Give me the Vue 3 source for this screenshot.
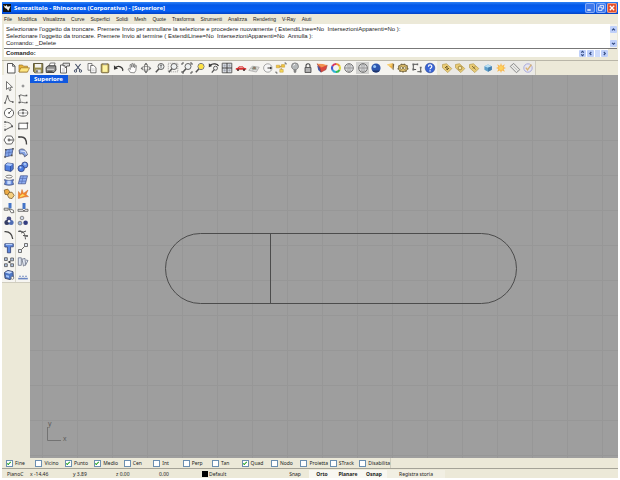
<script setup>
import { ref } from 'vue'

const menus = ['File', 'Modifica', 'Visualizza', 'Curve', 'Superfici', 'Solidi', 'Mesh', 'Quote', 'Trasforma', 'Strumenti', 'Analizza', 'Rendering', 'V-Ray', 'Aiuti']

const history = [
  "Selezionare l'oggetto da troncare. Premere Invio per annullare la selezione e procedere nuovamente ( EstendiLinee=No  IntersezioniApparenti=No ):",
  "Selezionare l'oggetto da troncare. Premere Invio al termine ( EstendiLinee=No  IntersezioniApparenti=No  Annulla ):",
  'Comando: _Delete'
]
const command = ref('')

const lens = '<circle cx="7" cy="4.5" r="3" fill="#eef1f2" stroke="#555"/><path d="M5 6.7 1.8 10.2" stroke="#444" stroke-width="1.5"/>'
const ball = (c) => `<circle cx="6" cy="6" r="4.3" fill="${c}" stroke="#555" stroke-width=".9"/><path d="M6 1.7v8.6M1.8 6h8.4" stroke="#777" stroke-width=".7"/><ellipse cx="6" cy="6" rx="2" ry="4.2" fill="none" stroke="#888" stroke-width=".6"/>`
const tag = (inner) => `<path d="M1.5 2.5 5.5 1.8 10.8 6.6 6.8 10.6 1.5 5.8z" fill="#e9c869" stroke="#b0923f" stroke-width=".7"/>${inner}`

const mainTools = [
  ['Nuovo', '<path d="M2.5 1.5h5l2.5 2.7v6.8H2.5z" fill="#fff" stroke="#333" stroke-width=".9"/><path d="M7.5 1.5v2.7H10" fill="none" stroke="#333" stroke-width=".8"/>'],
  ['Apri', '<path d="M1 3h3.5l1 1.2h4V10H1z" fill="#e9ae25" stroke="#916412" stroke-width=".7"/><path d="M2.8 5.8h8.7L9.5 10H1z" fill="#ffe576" stroke="#916412" stroke-width=".7"/>'],
  ['Salva', '<path d="M1.5 1.5h9.3v9.3H2.8L1.5 9.5z" fill="#8f823b" stroke="#443e20" stroke-width=".9"/><path d="M3 2h6.2v3.6H3z" fill="#f3f3ef"/><path d="M3.7 7.6h5v3H3.7z" fill="#ddd"/><path d="M4.3 8.2h1.3v2.4H4.3z" fill="#333"/>'],
  ['Stampa', '<path d="M4 4 5.3 1h4.8L9 4.5z" fill="#fff" stroke="#333" stroke-width=".7"/><path d="M1 5.6 3.2 3.8h7.5L11 8 9 10.5H1.3z" fill="#888" stroke="#222" stroke-width=".9"/><path d="M2 7.3h7" stroke="#ddd"/><path d="M2.5 9.3h5" stroke="#333"/>'],
  ['Proprietà', '<path d="M1.5 3h6v8h-6z" fill="#fff" stroke="#444" stroke-width=".9"/><path d="M4 1.2h6.5V4H8L6.3 6 6 3.8H4z" fill="#ddd" stroke="#333" stroke-width=".8"/><path d="M3 7h3M3 9h3" stroke="#999" stroke-width=".6"/>'],
  ['Taglia', '<path d="M3.4 2 8 8M8.6 2 4 8" stroke="#34405a" stroke-width="1.1"/><circle cx="3.5" cy="9" r="1.2" fill="none" stroke="#34405a"/><circle cx="8.5" cy="9" r="1.2" fill="none" stroke="#34405a"/>'],
  ['Copia', '<path d="M2 1.5h4v6.7H2z" fill="#fff" stroke="#555" stroke-width=".8"/><path d="M4.7 3.5h3L10 5.7v5.1H4.7z" fill="#fff" stroke="#444" stroke-width=".8"/><path d="M6 7h2.7M6 8.7h2.7" stroke="#aaa" stroke-width=".6"/>'],
  ['Incolla', '<rect x="2.2" y="1.8" width="7.6" height="9" rx="1" fill="#a88e38" stroke="#5e5024" stroke-width=".8"/><path d="M3.5 3.2h5v6.7h-5z" fill="#fff49b"/><path d="M4.3 1.2h3.4v1.6H4.3z" fill="#999"/>'],
  ['Annulla', '<path d="M2.3 6C4 3.6 7.2 4 9 6c1.2 1.4 1 2.2.6 3" fill="none" stroke="#222" stroke-width="1.2"/><path d="M.9 3.2 1 7.7 5 6.5z" fill="#222"/>'],
  ['Panoramica', '<path d="M3.4 10.5 1.2 7.2 1.8 6.4 3.4 7.4 3 2.8l1-.4.8 3V1.6l1-.2.5 3.7.6-3.3.9.2-.2 3.8 1-2.4.8.2-.6 5-1.4 2.2z" fill="#fff" stroke="#666" stroke-width=".8"/>'],
  ['Ruota vista', '<ellipse cx="6" cy="6.3" rx="4.7" ry="1.9" fill="none" stroke="#888" stroke-width=".9"/><ellipse cx="6" cy="6" rx="1.7" ry="4.5" fill="none" stroke="#666" stroke-width=".9"/><path d="M4.3 2.8 6 .7l1.7 2.1zM4.3 9.2 6 11.3l1.7-2.1zM2.7 4.9.8 6.5l1.9 1.6zM9.3 4.9l1.9 1.6-1.9 1.6z" fill="#555"/>'],
  ['Zoom dinamico', lens + '<path d="M7 2.7v3.6M6 3.8l1-1 1 1" fill="none" stroke="#333" stroke-width=".7"/>'],
  ['Zoom finestra', '<path d="M1.3 1.3h9.5v8.5H1.3z" fill="none" stroke="#666" stroke-width=".7" stroke-dasharray="1 1"/>' + lens],
  ['Zoom estensioni', lens + '<path d="M1 3V1h2M9 1h2v2M1 9v2h2M9 11h2V9" fill="none" stroke="#333" stroke-width=".9"/>'],
  ['Zoom selezionato', lens + '<circle cx="7" cy="4.5" r="2.5" fill="#ffe12d"/>'],
  ['Annulla vista', '<path d="M2 3.2C5 .8 9.5 1.8 10.5 4" fill="none" stroke="#222" stroke-width="1.2"/><path d="M.8 1.3v4l3.4-1.2z" fill="#222"/><circle cx="7.5" cy="6.2" r="2" fill="#eee" stroke="#555"/><path d="M6.2 7.7 3.8 10.6" stroke="#444" stroke-width="1.3"/>'],
  ['Quattro viste', '<path d="M1.2 1.2h9.6v9.6H1.2z" fill="#d3d8de" stroke="#444" stroke-width=".9"/><path d="M6 1v10M1 6h10" stroke="#333"/><path d="M2.4 3.7h2.4M7.3 3.7h2.4M2.4 8.4h2.4M7.3 8.4h2.4M3.6 2.5v2.2M8.5 2.5v2.2M3.6 7.3v2.2M8.5 7.3v2.2" stroke="#8990a0" stroke-width=".6"/>'],
  ['Vista destra', '<path d="M.8 7.8V6.2l2-.5 1.3-1.5h3.6L9 5.8l2.2.5v1.5z" fill="#d21d1d"/><path d="M4.6 4.8h2.8l.6.9H4z" fill="#f5b8b0"/><circle cx="3" cy="8" r="1.1" fill="#331b1b"/><circle cx="9" cy="8" r="1.1" fill="#331b1b"/>'],
  ['Piano di costruzione', '<path d="M.8 8.4 4.2 4.2l7 1L8.3 10z" fill="#ddd" stroke="#999" stroke-width=".7"/><path d="M2.5 6.3 9.7 7.8M6.5 4.7 4.5 9" stroke="#aaa" stroke-width=".6"/><path d="M4 6.2c1-2 3-2.4 4.4-.2L8 7.5H4.4z" fill="#79886f"/><path d="M5.5 6h1.7" stroke="#a2453d"/>'],
  ['Centro', '<circle cx="5.8" cy="6" r="4.2" fill="#f7f7f7" stroke="#888" stroke-width=".8"/><path d="M5.5 6h4" stroke="#222"/><path d="M8 4.6 10 6 8 7.4z" fill="#222"/>'],
  ['Seleziona', '<path d="M9.5 1H11v1.6M1 9.5V11h1.5" fill="none" stroke="#444" stroke-width=".9"/><path d="M1.3 3.2h3.4v2.6H1.3zM6.4 2.6h3.2v2.6H6.4z" fill="#f3c02a" stroke="#b98d1f" stroke-width=".5"/><path d="M4.8 7.4h3.4v2.8H4.8z" fill="#f8d649" stroke="#b98d1f" stroke-width=".5"/><path d="m4.5 4.7 2-.5M5.8 5.6l.8 1.8" fill="none" stroke="#9a7420" stroke-width=".8"/>'],
  ['Nascondi', '<path d="M4.6 7.7C3 6.3 2.5 5.4 2.6 4.2a3.4 3.3 0 0 1 6.8 0C9.5 5.4 9 6.3 7.4 7.7z" fill="#aeb2b4" stroke="#666" stroke-width=".8"/><path d="M4.7 7.8h2.6V10L6 11.3 4.7 10z" fill="#777"/><path d="M4.5 3.5c.3-.8.8-1 1.5-1" stroke="#fff" fill="none"/>'],
  ['Blocca', '<path d="M4 5.6V3.7a2 2 0 0 1 4 0v1.9" fill="none" stroke="#333" stroke-width="1.1"/><path d="M3 5.5h6v5H3z" fill="#999" stroke="#333" stroke-width=".8"/><path d="M4 7h4M4 8.8h4" stroke="#ccc" stroke-width=".6"/>'],
  ['Livelli', '<path d="M1.2 3.5 6 6.4 4.8 10.6 2.2 8z" fill="#33479b"/><path d="M1 1.8 5.3 4.6 11.2 3.2 10 7.6 5 10.2 4.2 6.8z" fill="#d9362b" stroke="#7f1f1b" stroke-width=".5"/><path d="M1 1.8 7 1.9l4.2 1.3L5.4 5.4z" fill="#f2873e"/>'],
  ['Colori', '<g fill="none" stroke-width="2.1"><path d="M6 2A4 4 0 0 1 9.5 4" stroke="#ef8b21"/><path d="M9.5 4a4 4 0 0 1 0 4" stroke="#ded62f"/><path d="M9.5 8A4 4 0 0 1 6 10" stroke="#20b543"/><path d="M6 10A4 4 0 0 1 2.5 8" stroke="#19a9d0"/><path d="M2.5 8a4 4 0 0 1 0-4" stroke="#3248ce"/><path d="M2.5 4A4 4 0 0 1 6 2" stroke="#d52456"/></g>'],
  ['Ombreggiatura', ball('#e3e5e7')],
  ['Vista ombreggiata', ball('#e9eaeb')],
  ['Rendering', '<circle cx="6" cy="6" r="4.6" fill="#1746a7"/><circle cx="4.6" cy="4.4" r="1.5" fill="#8ac1fa"/><path d="M2 8.6a5 5 0 0 0 8 0" fill="#071c56"/>'],
  ['Faretto', '<path d="M3 2.3 9 1.2 8.4 7.2z" fill="#efad32"/><path d="m8.8 1.2 1.4 1-.7 6-1-1z" fill="#6c5730"/><path d="M3.3 3h4.3" stroke="#ffe392"/>'],
  ['Opzioni', '<ellipse cx="6" cy="6" rx="4.5" ry="3.5" fill="#dcb95b" stroke="#6b5a2e" stroke-width=".9"/><ellipse cx="6" cy="6" rx="4.9" ry="3.9" fill="none" stroke="#6b5a2e" stroke-width="1.2" stroke-dasharray="1.5 1.5"/><circle cx="4.4" cy="6" r="1.3" fill="#fff6cf" stroke="#463a1c" stroke-width=".6"/><circle cx="7.7" cy="6" r="1.3" fill="#fff6cf" stroke="#463a1c" stroke-width=".6"/>'],
  ['Quote', '<path d="M2.3 3v4.5h2.8M3 2.3h3.5M9.7 5.5v4.2H6.3" fill="none" stroke="#333" stroke-width=".9"/><path d="M1.4 1.4h1.8v1.8H1.4zM1.4 6.6h1.8v1.8H1.4zM8.8 8.8h1.8v1.8H8.8zM5.8 1.4h1.4v1.8H5.8zM8.8 4.8h1.8v1.4H8.8z" fill="#555"/>'],
  ['Guida', '<circle cx="6" cy="6" r="4.8" fill="#2455d5" stroke="#163484" stroke-width=".6"/><path d="M4.4 4.7c0-2.4 3.5-2.2 3.4-.2C7.8 6 6 5.8 6 7.3" fill="none" stroke="#fff" stroke-width="1.2"/><path d="M5.4 8.2h1.3v1.2H5.4z" fill="#fff"/>']
]

const vrayTools = [
  ['Opzioni V-Ray', tag('<path d="m4 6 2-2v4l2-2" fill="none" stroke="#5b4613" stroke-width="1"/>')],
  ['Materiali', tag('<circle cx="6" cy="6" r="1.9" fill="#f7e7a8" stroke="#846718" stroke-width=".8"/>')],
  ['Luci', tag('<path d="m4 4 3.6 3.4M5 6.5l2-2" stroke="#6d5618" stroke-width=".9"/>')],
  ['Cubo', '<path d="M2.4 4.2 6 2.5l3.8 1.7v3.6L6 9.7 2.4 7.8z" fill="#4f97c8"/><path d="M2.4 4.2 6 2.5l3.8 1.7L6 5.8z" fill="#b5def5"/><path d="M6 5.8 9.8 4.2v3.6L6 9.7z" fill="#3474a8"/>'],
  ['Sole', '<path d="m6 1 1 2.7 2.8-1.5L8.7 5l2.3 1-2.3 1 1.1 2.7L7 8.4 6 11 5 8.4 2.2 9.7 3.3 7 1 6l2.3-1-1.1-2.8L5 3.7z" fill="#fbb540"/><circle cx="6" cy="6" r="2" fill="#ffcf4c"/>'],
  ['Piano infinito', '<path d="M1.2 4.4 4.7 1.4 10.8 7.7 7.4 10.7z" fill="#e8e8e5" stroke="#777" stroke-width=".9"/><path d="m3.8 3.8 4.8 4.7" stroke="#aaa" stroke-width=".7"/>'],
  ['Verifica', '<circle cx="6" cy="6" r="4.2" fill="#e5e5f2" stroke="#a5a5d8"/><path d="M3.8 5.7 5.5 8 9.4 2.5" fill="none" stroke="#d8ae68" stroke-width="1.3"/>']
]

const dot = (x, y) => `<path d="M${x - 0.8} ${y - 0.8}h1.6v1.6h-1.6z" fill="#444"/>`
const sideTools = [
  ['Selezione', '<path d="M3.5 1.5v8l2-1.8 1.2 3 1.4-.6-1.2-2.8h2.6z" fill="#fff" stroke="#444" stroke-width=".8"/>'],
  ['Punto', '<circle cx="6" cy="6" r="1" fill="#ddd" stroke="#555" stroke-width=".7"/>'],
  ['Polilinea', '<path d="M2 10 4.5 3l2 5 3.3 1" fill="none" stroke="#555" stroke-width=".9"/>' + dot(2, 10) + dot(4.5, 3) + dot(9.8, 9)],
  ['Curva', '<path d="M9.5 2.5C6 4 3 0 2.5 3c-.2 3 2 5-.3 6.8C6 8 7 11 10 9.5" fill="none" stroke="#555" stroke-width=".9"/>' + dot(9.5, 2.5) + dot(2.5, 2.7) + dot(2.3, 9.5) + dot(9.8, 9.5)],
  ['Cerchio', '<circle cx="6" cy="6" r="4.6" fill="#fff" stroke="#555"/><path d="m6 6 2.6-2.6" stroke="#444"/>' + dot(6, 6)],
  ['Ellisse', '<ellipse cx="6" cy="6" rx="4.8" ry="3.2" fill="#fff" stroke="#555"/><path d="M1 6h10M6 2.5v6.8" stroke="#777" stroke-width=".6"/>' + dot(6, 6) + dot(6, 2.7)],
  ['Arco', '<path d="M2 2c4 0 6.6 1.8 7.2 4.4L2 10" fill="none" stroke="#555"/><path d="M2 2v8" stroke="#888" stroke-width=".7" stroke-dasharray="1 1"/>' + dot(2, 2) + dot(2, 10) + dot(9.2, 6.4)],
  ['Rettangolo', '<path d="M1.8 3.2h8.6v5.6H1.8z" fill="#fff" stroke="#555"/>' + dot(1.8, 8.8) + dot(10.4, 3.2)],
  ['Poligono', '<path d="m3.5 2 5 0 2.5 4-2.5 4h-5L1 6z" fill="#fff" stroke="#555"/><path d="M6 6h4" stroke="#444"/><circle cx="6" cy="6" r="1.4" fill="#666"/>'],
  ['Raccorda curve', '<path d="M1.5 3h3c3.5 0 5 2 5 7.5" fill="none" stroke="#333" stroke-width="1.4"/>' + dot(2, 3)],
  ['Superficie da punti', '<path d="M2.8 2.8 10 1.8 8.8 8.4 2 10z" fill="#779ee9" stroke="#24356f" stroke-width=".7"/><path d="M2.4 6.2 9.4 5M6.3 2.3 5.5 9.2" stroke="#3a56a4" stroke-width=".6"/>' + dot(2.8, 2.8) + dot(10, 1.8) + dot(8.8, 8.4) + dot(2, 10)],
  ['Superficie', '<path d="M2 3.2c4-3.4 8 1 8.3 4.8L7.5 9.8C7 7 5.5 6.3 2.7 7z" fill="#7698e0" stroke="#3a3f59" stroke-width=".8"/><path d="m3.5 4 4.8.5 1 3" fill="none" stroke="#dfe9ff"/>'],
  ['Parallelepipedo', '<path d="M2 3.7 4.3 2l5.9.7v5.6L7.8 10.4 2 9.3z" fill="#3f73de" stroke="#1c2e69" stroke-width=".8"/><path d="m2.3 4 5.2 1 2.4-2.2L4.4 2.3z" fill="#a8c7ff"/><path d="M7.7 5v5.2" stroke="#173c91"/>'],
  ['Booleane', '<circle cx="7.8" cy="4" r="3" fill="#5d8bea" stroke="#1c2f70" stroke-width=".8"/><circle cx="4.2" cy="7.5" r="3.2" fill="#386ddb" stroke="#1c2f70" stroke-width=".8"/><circle cx="3.5" cy="6.5" r="1" fill="#bcd8ff"/><circle cx="8" cy="3" r=".9" fill="#bcd8ff"/>'],
  ['Estrusione', '<path d="M1.5 5.6c3 1.2 6 1.2 9 0l-.8 2.2.8 2.6c-3 1-6 1-9 0l.8-2.6z" fill="#5e87e0" stroke="#27376e" stroke-width=".8"/><path d="M4.3 6.6h3.4v3.6H4.3z" fill="#c4d9ff"/><ellipse cx="6" cy="2.6" rx="3.2" ry="1.4" fill="#fff" stroke="#555" stroke-width=".8"/>'],
  ['Superficie rete', '<path d="M3.5 1.8h7L8.4 9.8H1.3z" fill="#84a7f1" stroke="#263a7d" stroke-width=".7"/><path d="M2.8 4.4h7M2 7.2h7M6.3 1.8 4.5 9.8" stroke="#3a56a4" stroke-width=".6"/>'],
  ['Unisci', '<path d="M1.3 2 4.8 1.2l2 2.6-1.6 3L2 6.3z" fill="#eda332" stroke="#72501c" stroke-width=".8"/><path d="M6 4.6 9 4.2l2.2 3.2L9 10.6 6 10 4.6 7.3z" fill="#f6cb73" stroke="#72501c" stroke-width=".8"/>'],
  ['Esplodi', '<path d="m1.3 10.5.2-7 2.2 3L5 1.5l1.5 4L11 2 9 6.6l2.5 2L7.5 9z" fill="#f57c18" stroke="#c25a18" stroke-width=".5"/><path d="m2.5 9.5 1-2 2-1.5L8 7.5z" fill="#ffd64b"/>'],
  ['Tronca', '<path d="M5.5 1h3v5.5h-3z" fill="#3268c3"/><path d="M1.2 6.2h4v2h-4z" fill="#eee" stroke="#444" stroke-width=".8"/><path d="m6 6.8 4.4 1.4.4 2.4-2.6.2z" fill="#fff" stroke="#444" stroke-width=".8"/>'],
  ['Suddividi', '<path d="M5.5 1h3v6h-3z" fill="#3268c3"/><path d="M1 7.3h4.3L7 9l1.5-1.7H11v2H1z" fill="#eee" stroke="#444" stroke-width=".8"/>'],
  ['Gruppo', '<circle cx="5.9" cy="4" r="2.4" fill="#333b79"/><circle cx="3.9" cy="7.4" r="2.5" fill="#222b55"/><circle cx="8.1" cy="7.4" r="2.5" fill="#3e5fae"/><circle cx="6" cy="6.3" r="1.2" fill="#fff"/>'],
  ['Separa gruppo', '<circle cx="5" cy="3" r="1.8" fill="#ccd5e7" stroke="#555" stroke-width=".7"/><circle cx="3" cy="8.1" r="1.9" fill="#8eacdf" stroke="#555" stroke-width=".7"/><circle cx="8.6" cy="7.8" r="2.3" fill="#202b74"/>'],
  ['Modifica punti', '<path d="M1.5 2.7C6 2.3 9 5 9.7 10" fill="none" stroke="#333" stroke-width="1.3"/>'],
  ['Estendi curva', '<path d="M1 2.3h3c3 .2 4 3 4.5 8M4 4l5-2M6 6.5l5 .5" fill="none" stroke="#444"/>' + dot(3, 2.3) + dot(10, 7)],
  ['Testo', '<path d="M1.8 1.8h8.5v3H7.6v6H4.4V5H1.8z" fill="#4c7bdb" stroke="#1b2d68" stroke-width=".8"/><path d="M2.8 2.6h6.5" stroke="#bed4ff"/>'],
  ['Sposta', '<path d="M1.5 7.5h3v3h-3zM7.5 1.5h3v3h-3z" fill="#dde5f2" stroke="#444" stroke-width=".8"/><path d="m4.5 7.5 3-3" stroke="#555"/>'],
  ['Serie', '<path d="M1.5 1.7h2.8v2.8H1.5zM7.7 2h2.8v2.8H7.7zM1.5 7.8h2.8v2.8H1.5zM7.7 7.8h2.8v2.8H7.7z" fill="#abc0e4" stroke="#444" stroke-width=".8"/><path d="m4.5 6 3-1.5v3z" fill="#222"/>'],
  ['Orienta', '<path d="M1.3 1.8h3v7.5h-3zM5 3.2l3-.8.5 6-2 1.7zM9 4l2 .5-2.8 5.3" fill="#e3e9f5" stroke="#5b637b" stroke-width=".8"/>'],
  ['Analizza', '<path d="M1.5 3.5 4.8 1.4l5.2 1.3.3 5.6L7 10.6 2 9.3z" fill="#3c6bc2" stroke="#26335e" stroke-width=".9"/><path d="m2 3.5 4.6 1.3 3-1.7L5 1.9z" fill="#c4d9ff"/><path d="m3 6 3 .7v2L3.2 8z" fill="#9ec1fa"/><circle cx="9.4" cy="8.9" r="1.4" fill="#fff" stroke="#444" stroke-width=".6"/>'],
  ['Piano base', '<path d="M1.2 9.7h9.6" stroke="#5c7ac0" stroke-width="1.4"/><path d="M2 8.5l1-1.8 1 1.8M5 8.5l1-1.8 1 1.8M8 8.5l1-1.8 1 1.8" fill="none" stroke="#6f88c0" stroke-width=".8"/>']
]

const snaps = ref([
  { name: 'Fine', on: true }, { name: 'Vicino', on: false }, { name: 'Punto', on: true },
  { name: 'Medio', on: true }, { name: 'Cen', on: false }, { name: 'Int', on: false },
  { name: 'Perp', on: false }, { name: 'Tan', on: false }, { name: 'Quad', on: true },
  { name: 'Nodo', on: false }, { name: 'Proietta', on: false }, { name: 'STrack', on: false },
  { name: 'Disabilita', on: false }
])
</script>

<template>
  <div class="window">
    <header class="title">
      <svg class="logo" viewBox="0 0 9 9" aria-hidden="true">
        <rect width="9" height="9" fill="#111" />
        <path d="M.5 1.2 2.7 2.5 4 1l1.2 2L8.5 2.3 7 5.5 5.8 7.8 4.5 5.7 2.2 4.6z" fill="#eee" />
      </svg>
      <h1>Senzatitolo - Rhinoceros (Corporativa) - [Superiore]</h1>
      <div class="wins">
        <button class="win" aria-label="Riduci"><svg viewBox="0 0 10 10"><path d="M2.3 7h3.4" stroke="#fff" stroke-width="1.4" /></svg></button>
        <button class="win" aria-label="Ripristina"><svg viewBox="0 0 10 10"><path d="M4 3.8V2.4h3.6v3.3H6.3M2.4 4.2H6v3.2H2.4z" fill="none" stroke="#fff" stroke-width=".8" /></svg></button>
        <button class="win close" aria-label="Chiudi"><svg viewBox="0 0 10 10"><path d="m2.8 2.8 4.4 4.4M7.2 2.8 2.8 7.2" stroke="#fff" stroke-width="1.3" /></svg></button>
      </div>
    </header>

    <nav class="menu">
      <a v-for="m in menus" :key="m" href="#">{{ m }}</a>
    </nav>

    <section class="console">
      <div class="history">
        <div class="lines"><p v-for="line in history" :key="line">{{ line }}</p></div>
        <div class="scroll">
          <button aria-label="Su"><svg viewBox="0 0 7 7"><path d="m2 4.3 1.5-1.5L5 4.3" /></svg></button>
          <button aria-label="Giù"><svg viewBox="0 0 7 7"><path d="M2 2.8l1.5 1.5L5 2.8" /></svg></button>
        </div>
      </div>
      <div class="prompt">
        <label for="cmd">Comando:</label>
        <input id="cmd" v-model="command" type="text" />
        <button aria-label="Cronologia"><svg viewBox="0 0 7 7"><path d="m2.2 2.6 1.3-1.3 1.3 1.3M2.2 4.4l1.3 1.3 1.3-1.3" /></svg></button>
        <button aria-label="Sinistra"><svg viewBox="0 0 7 7"><path d="M4.3 2 2.8 3.5 4.3 5" /></svg></button>
        <span class="thumb"></span>
        <button aria-label="Destra"><svg viewBox="0 0 7 7"><path d="m2.8 2 1.5 1.5L2.8 5" /></svg></button>
      </div>
    </section>

    <div class="toolbar">
      <div class="tools main">
        <button v-for="[name, art] in mainTools" :key="name" :class="{ pressed: name === 'Vista ombreggiata' }" :aria-label="name">
          <svg viewBox="0 0 12 12" v-html="art"></svg>
        </button>
      </div>
      <div class="tools vray">
        <button v-for="[name, art] in vrayTools" :key="name" :aria-label="name">
          <svg viewBox="0 0 12 12" v-html="art"></svg>
        </button>
      </div>
    </div>

    <div class="body">
      <aside>
        <div class="side">
          <button v-for="[name, art] in sideTools" :key="name" :aria-label="name">
            <svg viewBox="0 0 12 12" v-html="art"></svg>
          </button>
        </div>
      </aside>
      <main>
        <h2>Superiore</h2>
        <svg class="drawing" aria-hidden="true">
          <defs>
            <pattern id="grid" x="12" y="30" width="35" height="35" patternUnits="userSpaceOnUse">
              <path d="M.5 0v35M0 .5h35" stroke="#979797" fill="none" />
            </pattern>
          </defs>
          <rect width="100%" height="100%" fill="url(#grid)" />
          <g fill="none" stroke="#4c4c4c">
            <rect x="135.5" y="158.5" width="351" height="70" rx="35" />
            <path d="M240.5 158.5v70" />
          </g>
          <path d="M17.5 352v13.5H31" fill="none" stroke="#737373" />
          <text x="18" y="351">y</text>
          <text x="33" y="366">x</text>
        </svg>
      </main>
    </div>

    <div class="snapbar">
      <div class="snaps">
        <label v-for="s in snaps" :key="s.name"><input v-model="s.on" type="checkbox" />{{ s.name }}</label>
      </div>
    </div>

    <footer class="status">
      <span class="plane">PianoC</span>
      <span class="coord">x -14.46</span>
      <span class="coord">y 3.89</span>
      <span class="coord">z 0.00</span>
      <span class="coord">0.00</span>
      <span class="layer"><i></i>Default</span>
      <button class="snap">Snap</button>
      <button class="on">Orto</button>
      <button class="on">Planare</button>
      <button class="on">Osnap</button>
      <button class="rec">Registra storia</button>
    </footer>
  </div>
</template>

<style>
body { margin: 0; background: #fff; }
</style>

<style scoped>
.window {
  box-sizing: border-box;
  min-height: 100vh;
  padding: 2px;
  display: flex;
  flex-direction: column;
  background: #fff;
  font-family: "Noto Sans", "Open Sans", sans-serif;
  font-size: 5px;
  line-height: 8px;
  color: #222;
}
h1, h2, p { margin: 0; font-weight: normal; }
button {
  margin: 0;
  padding: 0;
  border: 0;
  background: none;
  font: inherit;
  color: inherit;
  display: block;
}
svg { display: block; }

.title {
  height: 12px;
  padding: 0 1px;
  display: flex;
  align-items: center;
  gap: 3px;
  background: linear-gradient(#2f83f5, #0458e8 25%, #0560f5 75%, #0442c4);
}
.logo { width: 8px; height: 8px; }
.title h1 {
  flex: 1;
  font-size: 6px;
  font-weight: bold;
  color: #fff;
}
.wins { display: flex; gap: 1px; }
.win {
  width: 10px;
  height: 10px;
  border-radius: 2px;
  background: #3f78ea;
  box-shadow: inset 0 0 0 1px #85aaf5;
}
.win.close { background: #e3502c; box-shadow: inset 0 0 0 1px #f2a48d; }

.menu {
  height: 10px;
  padding: 0 2px;
  display: flex;
  align-items: center;
  gap: 6px;
  background: #ece9d8;
  font-family: "Liberation Sans", sans-serif;
}
.menu a { color: #222; text-decoration: none; }

.console {
  padding: 0 1px 3px 2px;
  background: #ece9d8;
  font-family: "Liberation Sans", sans-serif;
  font-size: 6px;
}
.history {
  display: flex;
  background: #fff;
  border-bottom: 1px solid #777;
}
.lines { flex: 1; padding: 2px 2px 1px; line-height: 7px; white-space: pre; }
.scroll { display: flex; flex-direction: column; justify-content: space-between; padding: 2px 0 1px; background: #f4f3ec; }
.scroll button, .prompt button {
  width: 7px;
  height: 7px;
  background: #bfd0fa;
  border-radius: 1px;
}
.scroll path, .prompt path { fill: none; stroke: #324a82; stroke-width: 1.1; }
.prompt {
  height: 8px;
  padding: 0 9px 0 2px;
  display: flex;
  align-items: center;
  gap: 1px;
  background: linear-gradient(to left, #ece9d8 9px, #fff 9px);
}
.prompt label { font-weight: bold; }
.prompt input {
  flex: 1;
  min-width: 0;
  height: 8px;
  padding: 0;
  border: 0;
  outline: 0;
  background: none;
  font: inherit;
}
.thumb { width: 5px; height: 7px; background: #cfdcfb; }

.toolbar {
  display: flex;
  gap: 3px;
  padding-left: 2px;
  background: #ece9d8;
  border-top: 1px solid #b9b6a8;
}
.tools {
  display: flex;
  padding: 1px 0;
  background: #f5f4f0;
}
.tools button { flex: 1; display: flex; justify-content: center; }
.tools svg, .side svg { width: 12px; height: 12px; opacity: 0.9; }
.main { width: 433px; }
.vray { width: 95px; background: #ebeae6; border-right: 1px solid #cfccbd; }
.pressed { background: #d2d2d0; }

.body { flex: 1; display: flex; }
aside { width: 28px; background: #ece9d8; }
.side {
  height: 203px;
  padding-top: 4px;
  display: grid;
  grid-template-columns: 1fr 1fr;
  grid-template-rows: repeat(15, 1fr);
  background: linear-gradient(to right, #f6f5f1 13px, #d9d7cb 13px, #d9d7cb 14px, #f6f5f1 14px);
  border-bottom: 1px solid #d0cdbf;
}
.side button { display: flex; align-items: center; justify-content: center; }
main { flex: 1; position: relative; background: #9e9e9e; }
h2 {
  position: absolute;
  left: 0;
  top: 0;
  padding: 0 5px 0 4px;
  font-size: 6px;
  font-weight: bold;
  background: #0f58e0;
  color: #fff;
}
.drawing { width: 100%; height: 100%; }
.drawing text { font-family: "Liberation Sans", sans-serif; font-size: 7px; fill: #5c5c5c; }

.snapbar { height: 10px; padding-left: 3px; background: #ece9d8; border-bottom: 1px solid #a5a397; }
.snaps {
  width: 384px;
  height: 10px;
  padding-left: 1px;
  display: grid;
  grid-template-columns: repeat(13, 1fr);
  align-items: center;
  border-right: 1px solid #cfccbd;
}
.snaps label { display: flex; align-items: center; gap: 2px; white-space: nowrap; }
.snaps input {
  box-sizing: border-box;
  appearance: none;
  flex: none;
  width: 7px;
  height: 7px;
  margin: 0;
  border: 1px solid #6c8fb0;
  background: #fff;
}
.snaps input:checked::after {
  content: "";
  display: block;
  width: 3px;
  height: 1px;
  margin-top: 1px;
  border: solid #21a121;
  border-width: 0 0 1px 1px;
  transform: rotate(-45deg);
}

.status {
  height: 8px;
  padding: 1px 0 0 5px;
  display: flex;
  align-items: center;
  background: #ece9d8;
  white-space: nowrap;
}
.plane { width: 23px; }
.coord { width: 43px; }
.layer { width: 79px; display: flex; align-items: center; gap: 1px; }
.layer i { width: 6px; height: 6px; background: #000; }
.status button { width: 26px; }
.status .snap { width: 28px; }
.status .rec { width: 58px; background: #f1efe3; }
.status .on { background: #f8f7f1; font-weight: bold; }
</style>
